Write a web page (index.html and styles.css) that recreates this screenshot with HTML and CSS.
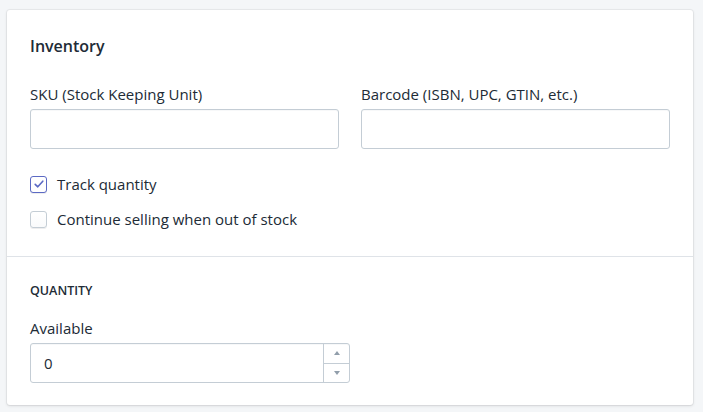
FILE: index.html
```html
<!DOCTYPE html>
<html>
<head>
<meta charset="utf-8">
<link rel="stylesheet" href="styles.css">
</head>
<body>
<div class="card">
  <section class="section">
    <h2 class="heading">Inventory</h2>
    <div class="grid">
      <div class="field">
        <label class="label">SKU (Stock Keeping Unit)</label>
        <div class="input"></div>
      </div>
      <div class="field">
        <label class="label">Barcode (ISBN, UPC, GTIN, etc.)</label>
        <div class="input"></div>
      </div>
    </div>
    <div class="checks">
      <div class="check">
        <span class="box checked">
          <svg width="12" height="12" viewBox="0 0 12 12"><path d="M2.2 6.3 L4.8 8.8 L9.8 3.2" fill="none" stroke="#5c6ac4" stroke-width="1.6" stroke-linecap="round" stroke-linejoin="round"/></svg>
        </span>
        <span class="check-text">Track quantity</span>
      </div>
      <div class="check">
        <span class="box"></span>
        <span class="check-text">Continue selling when out of stock</span>
      </div>
    </div>
  </section>
  <section class="section second">
    <h3 class="subheading">QUANTITY</h3>
    <div class="field half">
      <label class="label">Available</label>
      <div class="input number">
        <span class="value">0</span>
        <div class="spinner">
          <div class="spin up"><span class="tri-up"></span></div>
          <div class="spin down"><span class="tri-down"></span></div>
        </div>
      </div>
    </div>
  </section>
</div>
</body>
</html>
```

FILE: styles.css
```css
html, body {
  margin: 0;
  padding: 0;
}
body {
  background: #f4f6f8;
  font-family: "Open Sans", "Noto Sans", sans-serif;
  color: #212b36;
  padding: 10px 10px 0 7px;
  width: 703px;
  height: 412px;
  box-sizing: border-box;
}
.card {
  width: 686px;
  background: #fff;
  border-radius: 3px;
  box-shadow: 0 0 0 1px rgba(63, 63, 68, 0.06), 0 1px 3px 0 rgba(63, 63, 68, 0.15);
}
.section {
  padding: 24px 23px 25px 23px;
}
.second {
  border-top: 1px solid #dfe3e8;
  padding-top: 26px;
  padding-bottom: 22px;
}
.heading {
  margin: 0;
  font-size: 16px;
  line-height: 24px;
  font-weight: 600;
}
.grid {
  display: grid;
  grid-template-columns: 1fr 1fr;
  column-gap: 22px;
  margin-top: 26px;
}
.field {
  display: flex;
  flex-direction: column;
}
.half {
  width: 320px;
}
.label {
  font-size: 15px;
  line-height: 20px;
  margin-bottom: 5px;
}
.input {
  height: 40px;
  box-sizing: border-box;
  border: 1px solid #c4cdd5;
  border-radius: 3px;
  box-shadow: inset 0 1px 0 0 rgba(99, 115, 129, 0.05);
  background: #fff;
}
.number {
  display: flex;
  align-items: center;
  justify-content: space-between;
}
.value {
  font-size: 15px;
  padding-left: 13px;
}
.spinner {
  width: 25px;
  height: 38px;
  border-left: 1px solid #c4cdd5;
  display: flex;
  flex-direction: column;
}
.spin {
  flex: 1;
  display: flex;
  align-items: center;
  justify-content: center;
}
.up {
  border-bottom: 1px solid #c4cdd5;
}
.tri-up {
  width: 0;
  height: 0;
  border-left: 3.5px solid transparent;
  border-right: 3.5px solid transparent;
  border-bottom: 4px solid #919eab;
}
.tri-down {
  width: 0;
  height: 0;
  border-left: 3.5px solid transparent;
  border-right: 3.5px solid transparent;
  border-top: 4px solid #919eab;
}
.checks {
  margin-top: 23px;
  display: flex;
  flex-direction: column;
  gap: 11px;
}
.check {
  display: flex;
  align-items: center;
  height: 24px;
}
.box {
  width: 17px;
  height: 17px;
  box-sizing: border-box;
  border: 1px solid #c4cdd5;
  border-radius: 3px;
  background: linear-gradient(#fff, #f9fafb);
  box-shadow: 0 1px 0 0 rgba(22, 29, 37, 0.08);
  display: flex;
  align-items: center;
  justify-content: center;
  margin-right: 10px;
}
.box.checked {
  border-color: #5c6ac4;
  background: #fff;
}
.check-text {
  font-size: 15px;
  line-height: 20px;
}
.subheading {
  margin: 0;
  font-size: 12.5px;
  line-height: 16px;
  font-weight: 600;
}
.second .field {
  margin-top: 19px;
}
```
